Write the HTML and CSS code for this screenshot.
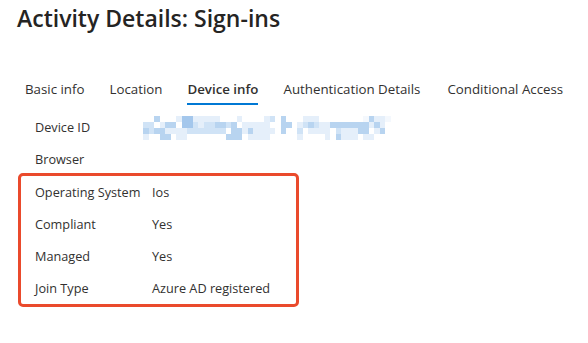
FILE: index.html
```html
<!DOCTYPE html>
<html lang="en">
<head>
    <meta charset="UTF-8">
    <meta name="viewport" content="width=device-width, initial-scale=1.0">
    <title>Activity Details: Sign-ins</title>
    <link rel="stylesheet" href="styles.css">
</head>
<body>
    <h1 class="title">Activity Details: Sign-ins</h1>

    <div class="tabs">
        <span class="tab">Basic info</span>
        <span class="tab">Location</span>
        <span class="tab active">Device info</span>
        <span class="tab">Authentication Details</span>
        <span class="tab">Conditional Access</span>
    </div>

    <div class="details">
        <div class="row">
            <span class="label">Device ID</span>
            <span class="value"><div class="mosaic" id="device-id"></div></span>
        </div>
        <div class="row">
            <span class="label">Browser</span>
            <span class="value"></span>
        </div>

        <!-- bloco destacado -->
        <div class="highlight">
            <div class="row">
                <span class="label">Operating System</span>
                <span class="value">Ios</span>
            </div>
            <div class="row">
                <span class="label">Compliant</span>
                <span class="value">Yes</span>
            </div>
            <div class="row">
                <span class="label">Managed</span>
                <span class="value">Yes</span>
            </div>
            <div class="row">
                <span class="label">Join Type</span>
                <span class="value">Azure AD registered</span>
            </div>
        </div>
    </div>

    <script src="app.js"></script>
</body>
</html>
```

FILE: styles.css
```css
body {
    font-family: 'Open Sans', 'Noto Sans', sans-serif;
    background: #fff;
    color: #323130;
    margin: 0;
    padding: 0;
}

.title {
    margin: 0;
    padding: 2px 0 0 17px;
    font-size: 23px;
    line-height: 32px;
    font-weight: 600;
    color: #252423;
}

.tabs {
    display: flex;
    margin: 45px 0 0 25px;
}

.tab {
    font-size: 13.3px;
    line-height: 20px;
    padding-bottom: 4px;
    margin-right: 25px;
    border-bottom: 2px solid transparent;
    white-space: nowrap;
}

.tab:nth-child(4) {
    margin-right: 27px;
}

.tab.active {
    font-weight: 600;
    border-bottom-color: #0078d4;
}

.details {
    margin: 6px 0 0 18px;
}

.row {
    display: flex;
    align-items: center;
    height: 32px;
    padding-left: 17px;
    font-size: 12.7px;
}

.label {
    width: 117px;
    flex-shrink: 0;
}

.highlight {
    width: 275px;
    margin-top: -2px;
    border: 3px solid #ea4a2c;
    border-radius: 5px;
}

.highlight .row {
    padding-left: 14px;
}

.mosaic {
    display: grid;
    grid-template-columns: repeat(45, 5.5px);
    grid-template-rows: repeat(4, 6px);
    margin: 2px 0 0 -9px;
}

.cell.a { background-color: #e5effa; }
.cell.b { background-color: #d0e3f6; }
.cell.c { background-color: #b8d4f0; }
.cell.d { background-color: #a4c7ec; }
.cell.f { background-color: #f4f8fd; }
```

FILE: app.js
```js
// ID do dispositivo borrado (pixelado)
const rows = [
    "  c   addaaaaa   a    ab c   aaa        fcaaf",
    "bb acc ddbabbccbc aaaaa  cc abcbaacccccccaca ",
    "cbccaaaabbbbbbb ccacaaaa c  b aaaa baaacc ac ",
    "a  cc aa       ccc aaaa     a    a caaa aa   "
];

const mosaic = document.getElementById('device-id');
rows.forEach(row => {
    for (const ch of row) {
        const cell = document.createElement('span');
        cell.className = ch === ' ' ? 'cell' : 'cell ' + ch;
        mosaic.appendChild(cell);
    }
});
```
